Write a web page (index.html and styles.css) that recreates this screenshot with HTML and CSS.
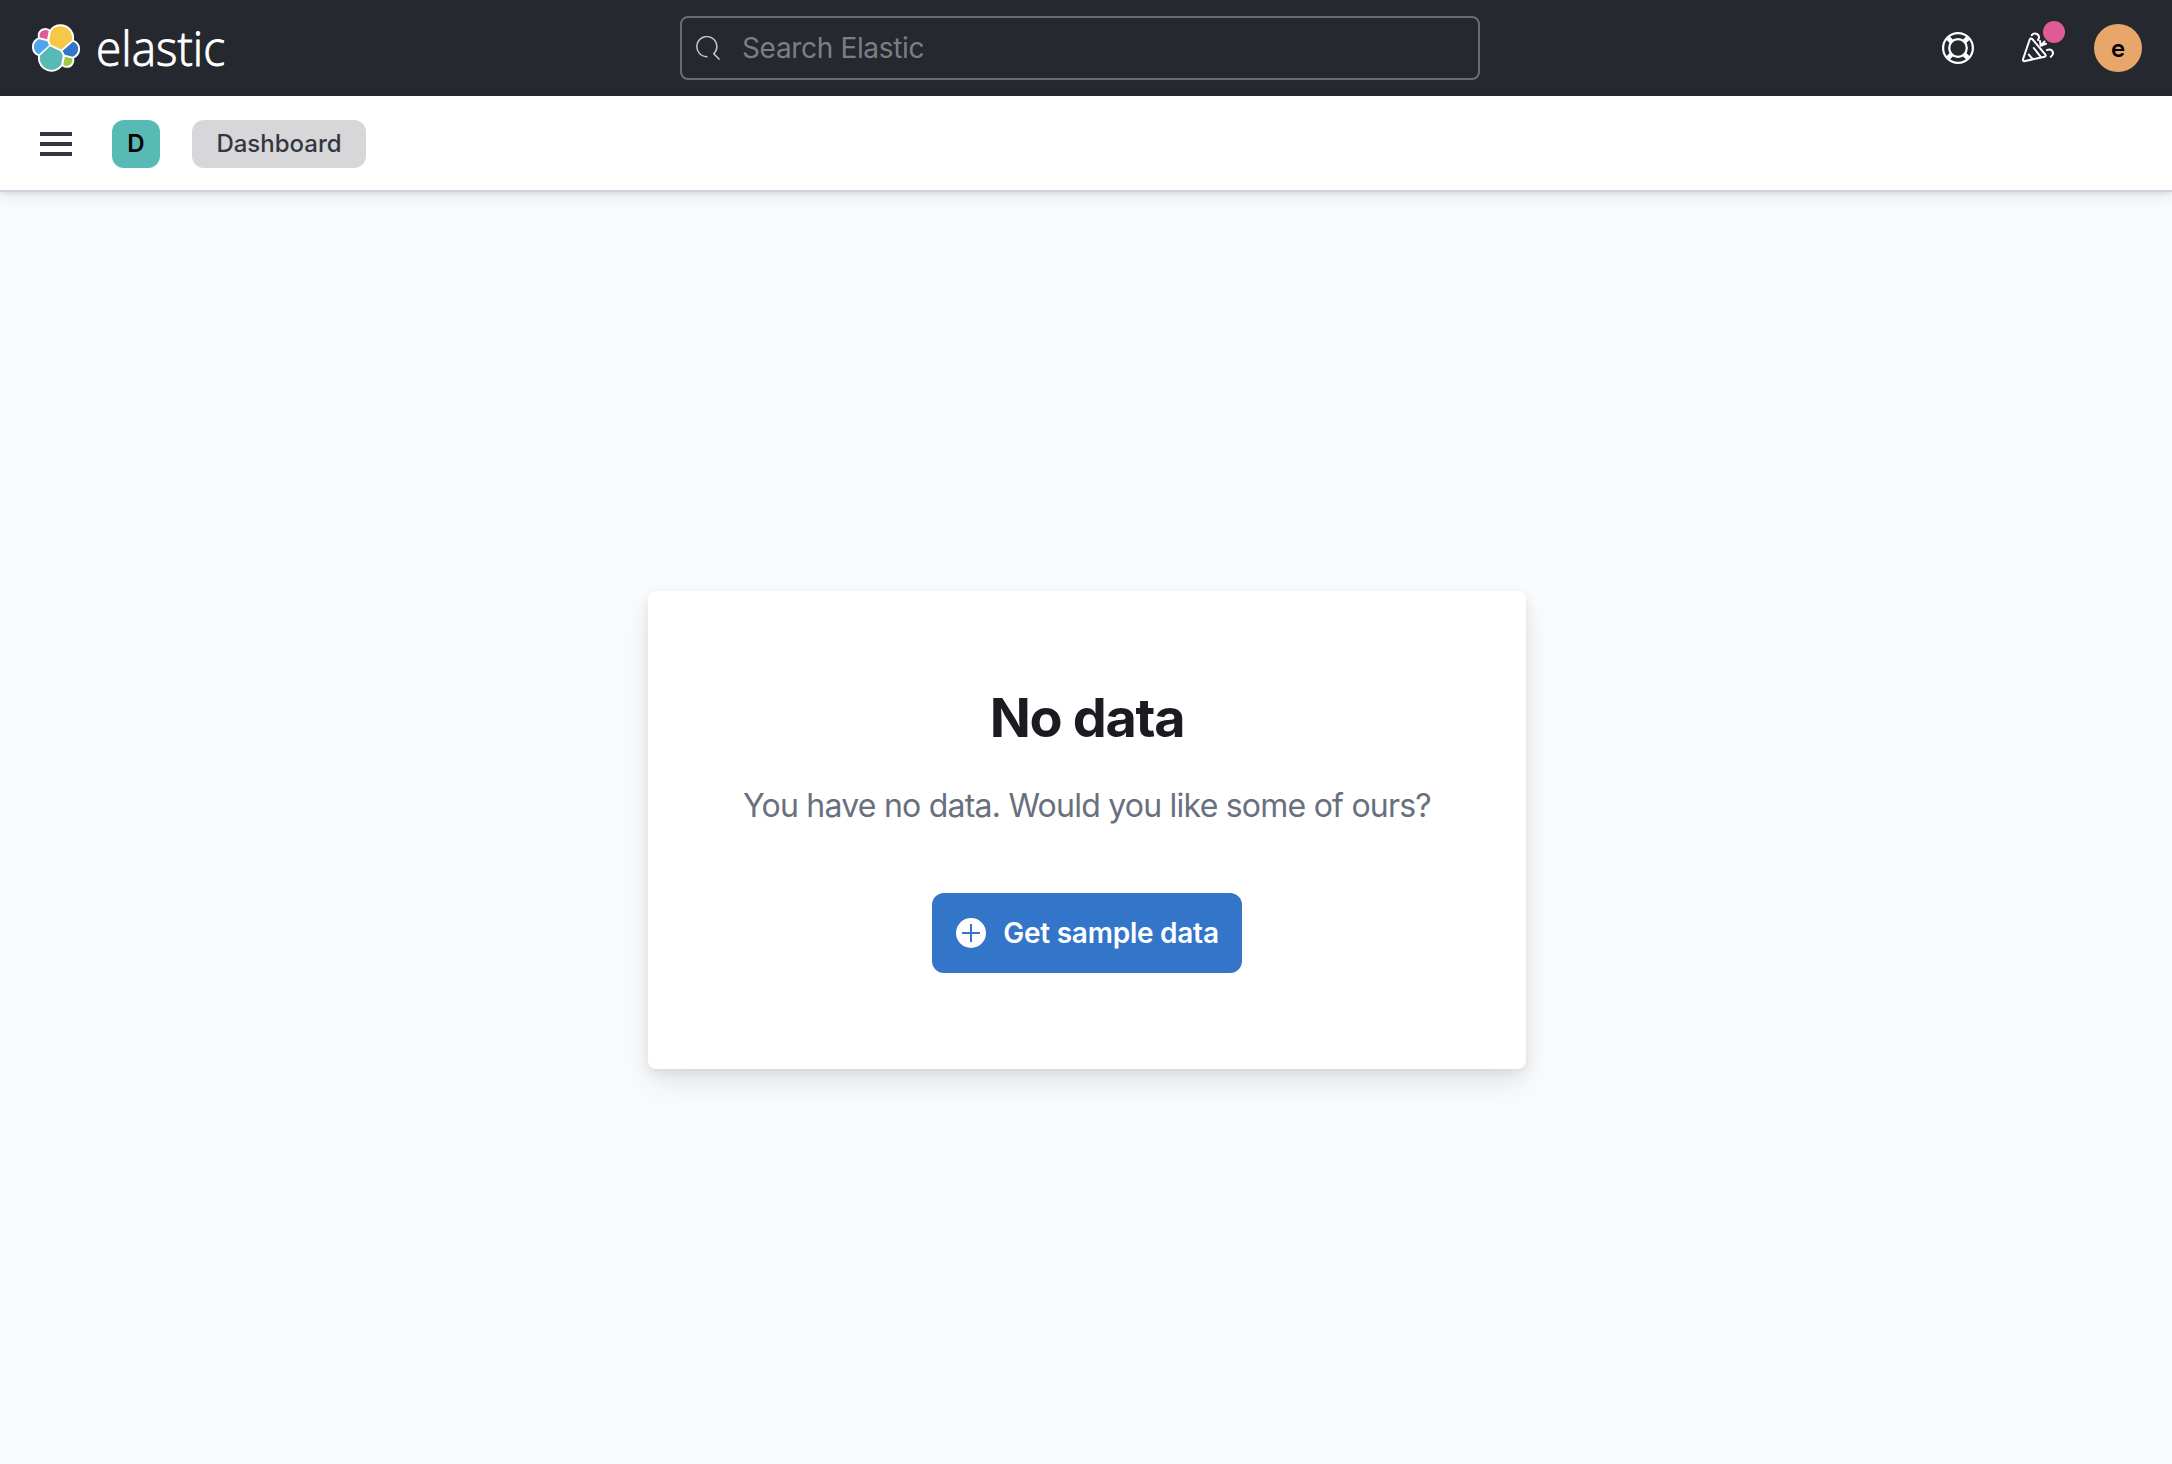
FILE: index.html
```html
<!DOCTYPE html>
<html lang="en">
<head>
<meta charset="utf-8">
<title>Dashboard - Elastic</title>
<link rel="stylesheet" href="styles.css">
</head>
<body>
<header class="topbar">
  <a class="brand">
    <svg class="brand-mark" viewBox="0 0 32 32">
      <g stroke="#fff" stroke-width="2.5" stroke-linejoin="round" fill="#fff">
        <path d="M12.58 13.787l7.002 3.211 7.066-6.213a7.849 7.849 0 00.152-1.557c0-4.287-3.474-7.775-7.743-7.775a7.736 7.736 0 00-6.383 3.364l-1.176 6.12 1.082 2.85z"/>
        <path d="M5.333 21.214a7.946 7.946 0 00-.152 1.572 7.788 7.788 0 0014.2 4.39l1.166-6.1-1.556-2.988-7.03-3.214-6.628 6.34z"/>
        <path d="M5.288 9.067l4.8 1.137L11.14 4.73a3.785 3.785 0 00-6.066 2.982c0 .46.085.925.214 1.355z"/>
        <path d="M4.872 10.214c-2.144.714-3.641 2.78-3.641 5.056 0 2.216 1.363 4.195 3.408 4.979l6.735-6.117-1.236-2.656-5.266-1.262z"/>
        <path d="M20.873 27.177a3.77 3.77 0 002.287.784 3.786 3.786 0 003.571-5.035l-4.796-1.122-1.062 5.373z"/>
        <path d="M21.848 20.563l5.28 1.238c2.145-.714 3.64-2.78 3.64-5.056a5.329 5.329 0 00-3.415-4.969l-6.904 6.074 1.399 2.713z"/>
      </g>
      <path fill="#f6c846" d="M12.58 13.787l7.002 3.211 7.066-6.213a7.849 7.849 0 00.152-1.557c0-4.287-3.474-7.775-7.743-7.775a7.736 7.736 0 00-6.383 3.364l-1.176 6.12 1.082 2.85z"/>
      <path fill="#58bab4" d="M5.333 21.214a7.946 7.946 0 00-.152 1.572 7.788 7.788 0 0014.2 4.39l1.166-6.1-1.556-2.988-7.03-3.214-6.628 6.34z"/>
      <path fill="#e15a98" d="M5.288 9.067l4.8 1.137L11.14 4.73a3.785 3.785 0 00-6.066 2.982c0 .46.085.925.214 1.355z"/>
      <path fill="#50a3ee" d="M4.872 10.214c-2.144.714-3.641 2.78-3.641 5.056 0 2.216 1.363 4.195 3.408 4.979l6.735-6.117-1.236-2.656-5.266-1.262z"/>
      <path fill="#9fc93f" d="M20.873 27.177a3.77 3.77 0 002.287.784 3.786 3.786 0 003.571-5.035l-4.796-1.122-1.062 5.373z"/>
      <path fill="#3275c9" d="M21.848 20.563l5.28 1.238c2.145-.714 3.64-2.78 3.64-5.056a5.329 5.329 0 00-3.415-4.969l-6.904 6.074 1.399 2.713z"/>
    </svg>
    <svg class="wordmark" viewBox="0 0 132 48"><text x="0" y="41.500" textLength="129" lengthAdjust="spacingAndGlyphs">elastic</text></svg>
  </a>
  <label class="search">
    <svg class="search-icon" viewBox="0 0 24 24"><path d="M11.5 20.6A10 10 0 1 1 17.8 17.8L23.5 23.5" fill="none" stroke="#c6c7ca" stroke-width="1.5"/></svg>
    <input type="text" placeholder="Search Elastic">
  </label>
  <nav class="actions">
    <a class="action">
      <svg class="icon" viewBox="0 0 32 32" fill="none" stroke="#fff" stroke-width="2.2">
        <circle cx="16" cy="16" r="14.900"/><circle cx="16" cy="16" r="8.800"/>
        <path stroke-width="4.600" d="M6 6l4 4M26 6l-4 4M6 26l4-4M26 26l-4-4"/>
      </svg>
    </a>
    <a class="action">
      <svg class="icon" viewBox="0 0 32 32" fill="none" stroke="#fff" stroke-width="2" stroke-linecap="round" stroke-linejoin="round">
        <path d="M7.800 7.200L1.100 27Q.5 29.500 3 29.100L22.600 24.800Q24.400 24 23.200 22.400L10.400 7.200Q8.800 5.600 7.800 7.200z"/>
        <path d="M11.800 16L18.300 24.300M6.800 22.600L10.600 27"/>
        <path d="M9.800 3.200C12 .2 17.300 1.600 17 5.800L16 8M25 18C30 15.800 33.300 21.400 28.800 24.800M18 9L18.700 13.700L24 11.800M18.700 13.700L22.500 9.500"/>
      </svg>
      <span class="dot"></span>
    </a>
    <span class="avatar user">e</span>
  </nav>
</header>
<div class="crumbbar">
  <a class="menu"><span></span><span></span><span></span></a>
  <span class="avatar space">D</span>
  <span class="crumb">Dashboard</span>
</div>
<main class="page">
  <section class="card">
    <h1>No data</h1>
    <p>You have no data. Would you like some of ours?</p>
    <button class="cta" type="button">
      <svg class="plus" viewBox="0 0 30 30"><circle cx="15" cy="15" r="15" fill="#fff"/><path d="M15 6v18M6 15h18" stroke="#3275c9" stroke-width="2"/></svg>
      <span>Get sample data</span>
    </button>
  </section>
</main>
</body>
</html>
```
FILE: styles.css
```css
* { box-sizing: border-box; }
body {
  margin: 0;
  height: 1464px;
  display: flex;
  flex-direction: column;
  background: #fafbfd;
  font-family: Inter, "Liberation Sans", sans-serif;
  color: #343741;
}
svg { display: block; }
.topbar {
  flex: none;
  height: 96px;
  padding: 0 30px 0 32px;
  background: #25282f;
  display: grid;
  grid-template-columns: 648px 800px 1fr;
  align-items: center;
}
.brand { display: flex; gap: 16px; }
.brand-mark { width: 48px; height: 48px; }
.wordmark { width: 132px; height: 48px; overflow: visible; }
.wordmark text {
  font-family: "Open Sans", sans-serif;
  font-weight: 300;
  font-size: 47px;
  fill: #fff;
  stroke: #fff;
  stroke-width: .9px;
}
.search {
  height: 64px;
  border: 2px solid #6b6c71;
  border-radius: 8px;
  display: flex;
  align-items: center;
  padding-left: 14px;
  gap: 22px;
}
.search-icon { width: 24px; height: 24px; }
.search input {
  flex: 1;
  padding: 0;
  border: 0;
  outline: 0;
  background: none;
  font: 400 28px/40px Inter, sans-serif;
  letter-spacing: -.34px;
}
.search input::placeholder { color: #7d7e82; opacity: 1; }
.actions { display: flex; align-items: center; justify-content: flex-end; gap: 48px; }
.action { position: relative; }
.action:nth-child(2) { margin-right: -8px; }
.icon { width: 32px; height: 32px; overflow: visible; }
.dot {
  position: absolute;
  left: 21px;
  top: -11px;
  width: 22px;
  height: 22px;
  border-radius: 50%;
  background: #df5b96;
}
.avatar {
  width: 48px;
  height: 48px;
  display: flex;
  align-items: center;
  justify-content: center;
  color: #000;
  font-size: 24px;
  font-weight: 600;
}
.user { border-radius: 50%; background: #e8a76a; }
.crumbbar {
  flex: none;
  position: relative;
  height: 96px;
  padding: 1px 40px 0;
  background: #fff;
  border-bottom: 2px solid #ccd3df;
  display: flex;
  align-items: center;
  box-shadow: 0 2px 4px rgba(0, 0, 0, .08), 0 6px 16px rgba(0, 0, 0, .07);
}
.menu { width: 32px; display: grid; gap: 6px; margin-right: 40px; }
.menu span { height: 4px; background: #343741; }
.space { border-radius: 12px; background: #58bab4; margin-right: 32px; }
.crumb {
  width: 174px;
  height: 48px;
  border-radius: 12px;
  background: #d7d7d9;
  font-size: 24px;
  line-height: 48px;
  font-weight: 500;
  text-align: center;
}
.page { flex: 1; display: flex; align-items: center; justify-content: center; padding: 4px 0 0 2px; }
.card {
  width: 878px;
  height: 478px;
  padding: 95px 96px;
  border-radius: 8px;
  background: #fff;
  display: flex;
  flex-direction: column;
  align-items: center;
  box-shadow: 0 2px 10px rgba(0, 0, 0, .05), 0 8px 16px rgba(0, 0, 0, .05), 0 16px 36px rgba(0, 0, 0, .07);
}
.card h1 {
  margin: 0;
  font-size: 54px;
  line-height: 64px;
  font-weight: 700;
  letter-spacing: -1.3px;
  color: #1a1c21;
}
.card p {
  margin: 32px 0 63px;
  font-size: 32px;
  line-height: 48px;
  letter-spacing: -.77px;
  color: #69707d;
  white-space: nowrap;
}
.cta {
  flex: none;
  width: 310px;
  height: 80px;
  padding: 0 0 1px 1px;
  border: 0;
  border-radius: 12px;
  background: #3275c9;
  color: #fff;
  display: flex;
  align-items: center;
  justify-content: center;
  gap: 17px;
  font: 600 28px/40px Inter, sans-serif;
  letter-spacing: -.25px;
  white-space: nowrap;
}
.plus { width: 30px; height: 30px; }
```
